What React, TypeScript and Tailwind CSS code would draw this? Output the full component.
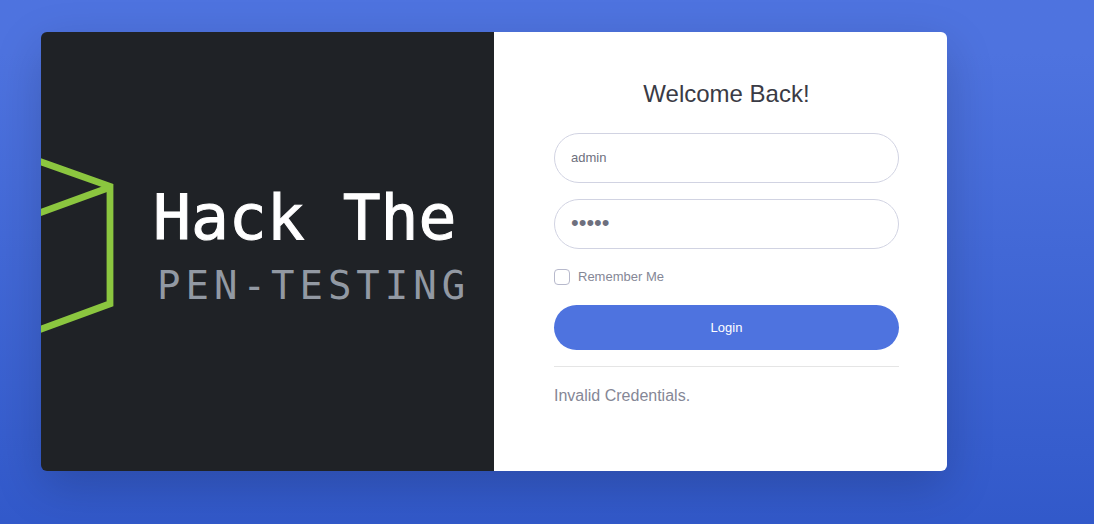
import React from "react";

function BrandPanel() {
  return (
    <div className="flex w-1/2 items-start overflow-hidden bg-[#1f2226] pt-[123px]">
      <svg viewBox="0 0 74 180" className="h-[180px] w-[74px] shrink-0" fill="none" aria-hidden="true">
        <g stroke="#8bc63f" strokeWidth="6.8" strokeLinejoin="miter">
          <path d="M-20 -0.3 L69 31.4 V148.8 L-20 181.6" />
          <path d="M-20 64.8 L69 32.2" />
        </g>
      </svg>
      <div className="flex shrink-0 flex-col pt-[25px] pl-[38px] font-['DejaVu_Sans_Mono',monospace] whitespace-nowrap">
        <span className="text-[63px] leading-[76px] text-white [-webkit-text-stroke:1px_white]">Hack The</span>
        <span className="pt-1.5 pl-1 text-[39px] leading-[48px] tracking-[5px] text-[#9299a3]">PEN-TESTING</span>
      </div>
    </div>
  );
}

function LoginForm() {
  const inputClass =
    "h-[50px] w-full rounded-full border border-[#d1d3e2] bg-white px-4 pb-0.5 text-[#6e707e] outline-none focus:border-[#bac8f3]";
  return (
    <div className="w-1/2 bg-white py-12 pr-12 pl-15">
      <h1 className="mb-[26px] text-center text-2xl leading-[27px] text-[#3a3b45]">Welcome Back!</h1>
      <form className="flex flex-col gap-4" onSubmit={(e) => e.preventDefault()}>
        <input
          type="text"
          name="username"
          aria-label="Username"
          defaultValue="admin"
          className={`${inputClass} text-[13px]`}
        />
        <input
          type="password"
          name="password"
          aria-label="Password"
          defaultValue="admin"
          className={`${inputClass} text-[22px]`}
        />
        <div className="flex h-6 items-center gap-2">
          <input
            id="remember"
            type="checkbox"
            className="size-4 appearance-none rounded border border-[#b7b9cc] bg-white checked:border-[#4e73df] checked:bg-[#4e73df]"
          />
          <label htmlFor="remember" className="text-[13px] leading-6 text-[#858796]">
            Remember Me
          </label>
        </div>
        <button type="submit" className="h-[45px] w-full rounded-full bg-[#4e73df] text-[13px] text-white hover:bg-[#2e59d9]">
          Login
        </button>
      </form>
      <hr className="my-4 border-t border-black/10" />
      <p className="mb-3.5 text-base leading-[26px] text-[#858796]">Invalid Credentials.</p>
    </div>
  );
}

export default function App() {
  return (
    <div className="flex min-h-screen items-start bg-linear-to-b from-[#4e73df] from-10% to-[#224abe] to-150% px-[41px] py-8 font-['Liberation_Sans',Arial,sans-serif]">
      <main className="flex w-full max-w-[906px] overflow-hidden rounded-md shadow-[0_16px_48px_rgba(0,0,0,0.175)]">
        <BrandPanel />
        <LoginForm />
      </main>
    </div>
  );
}
